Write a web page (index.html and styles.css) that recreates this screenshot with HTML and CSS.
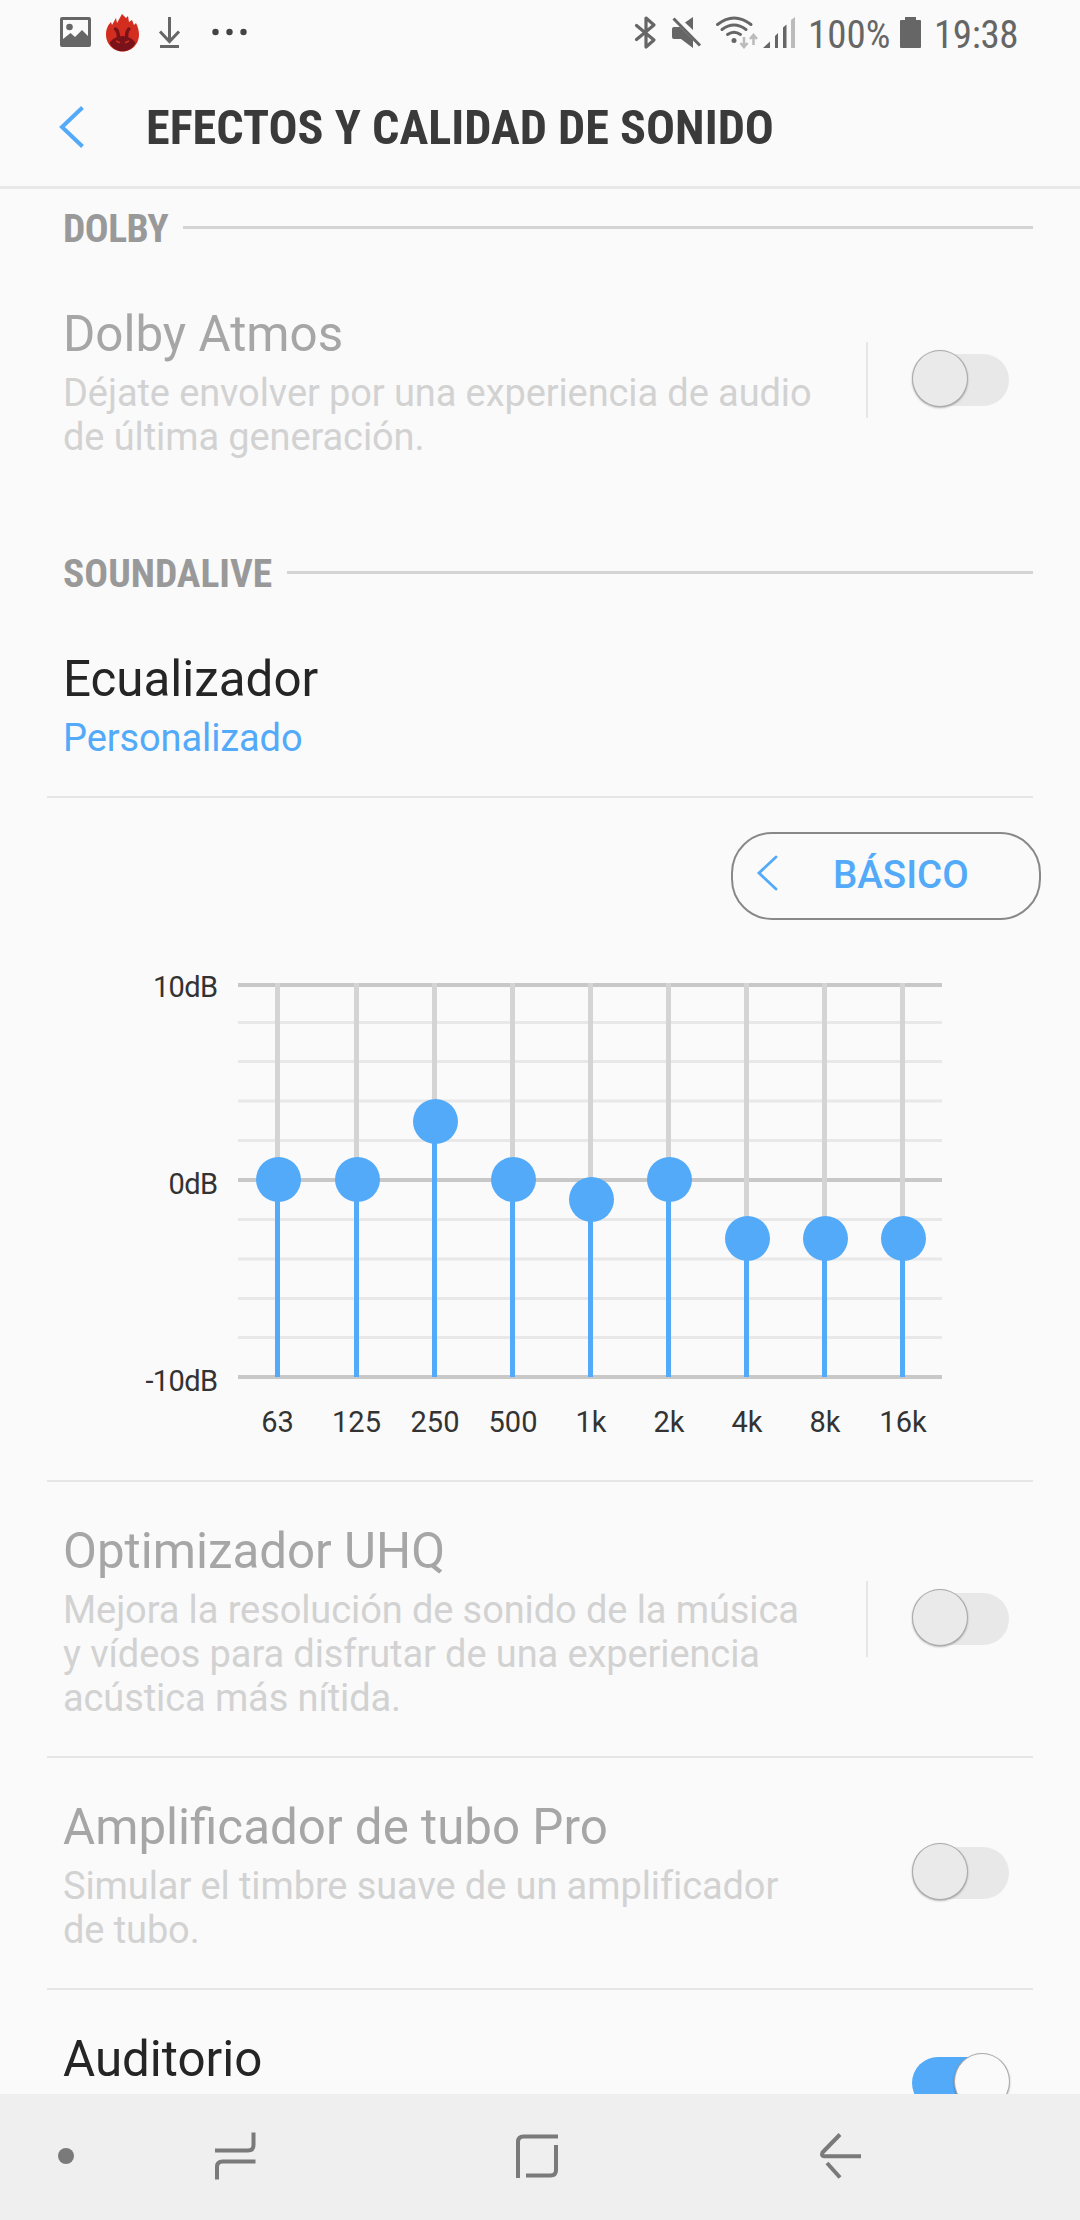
FILE: index.html
```html
<!DOCTYPE html>
<html lang="es">
<head>
	<meta charset="UTF-8">
	<title>Efectos y calidad de sonido</title>
	<link rel="stylesheet" href="styles.css">
</head>
<body>
	<div class="status">
		<svg class="statusLeft" width="260" height="64" viewBox="0 0 260 64">
			<!-- imagen -->
			<path fill="#666" fill-rule="evenodd" d="M62 17H89a2 2 0 0 1 2 2V45a2 2 0 0 1-2 2H62a2 2 0 0 1-2-2V19a2 2 0 0 1 2-2zM63 20V39L70.500 33 75 37 82 30 88 36V20z"/>
			<circle cx="69.500" cy="27" r="3.300" fill="#666"/>
			<!-- antutu -->
			<path fill="#d32d20" d="M106 35C106 29 108 25 111 22L112 25 116 18 117 23 122 14 126 18 128 16 129 22 132 20 134 25 136 23C138 27 139 31 139 35A16.500 16.500 0 0 1 106 35z"/>
			<path fill="none" stroke="#7a1219" stroke-width="3.400" stroke-linecap="round" d="M115.500 29Q118.500 31 118.500 38M129 29Q126.500 31 126.500 38"/>
			<path fill="#7a1219" d="M109.500 43C112 39 117 36 122.500 36S133 39 135.500 43C133 48 128 51.300 122.500 51.300S112 48 109.500 43z"/>
			<path stroke="#d32d20" stroke-width="1.500" d="M116 41l4 1.800M129 41l-4 1.800"/>
			<!-- descarga -->
			<path fill="none" stroke="#666" stroke-width="3" d="M169.500 17V42M160 31.500L169.500 41.500 179 31.500M160 46.500H179"/>
			<g fill="#444"><circle cx="215.500" cy="32" r="3.200"/><circle cx="229.500" cy="32" r="3.200"/><circle cx="243.500" cy="32" r="3.200"/></g>
		</svg>
		<div class="statusRight">
			<svg width="164" height="64" viewBox="634 0 164 64">
				<path fill="none" stroke="#666" stroke-width="3.200" stroke-linecap="round" stroke-linejoin="round" d="M636.500 25.500L654 40 646 47V18L654 25 636.500 39.500"/>
				<path fill="#666" d="M693 17V30L685 22.500zM672 29q0-2 2-2H680L693 40V48L681 39H674q-2 0-2-2z"/>
				<path stroke="#666" stroke-width="3" d="M673.500 18.500L700 45.500"/>
				<path fill="none" stroke="#666" stroke-width="3" stroke-linecap="round" d="M717.500 24.500Q734 11.500 751 24.500M722 29.500Q734 20.500 746 29.500M727.500 34.500Q734 30 740.500 34.500"/>
				<circle cx="734" cy="40.500" r="2.500" fill="#666"/>
				<path fill="none" stroke="#bbb" stroke-width="2.500" d="M744 37V46M740.500 43L744 47 747.500 43M753.500 45V36M750 39L753.500 35 757 39"/>
				<path fill="#666" d="M763 48L770 41.500V48zM775 36L778 33V48H775zM783 27.500L786.500 24.500V48H783z"/>
				<path fill="#bbb" d="M791 20L795 17V48H791z"/>
			</svg>
			<span class="percent">100%</span>
			<svg width="21" height="64" viewBox="900 0 21 64"><path fill="#666" d="M905 17H916V20H920a1 1 0 0 1 1 1V47a1 1 0 0 1-1 1H901a1 1 0 0 1-1-1V21a1 1 0 0 1 1-1H905z"/></svg>
			<span class="clock">19:38</span>
		</div>
	</div>
	<div class="header">
		<svg width="28" height="44" viewBox="0 0 28 44"><path fill="none" stroke="#52aaf9" stroke-width="4" d="M25.500 2.500L5 22 25.500 41.500"/></svg>
		<h1>EFECTOS Y CALIDAD DE SONIDO</h1>
	</div>
	<div class="content">
		<div class="section dolby"><h2>DOLBY</h2><i></i></div>
		<div class="row disabled">
			<div class="text">
				<h3>Dolby Atmos</h3>
				<p>Déjate envolver por una experiencia de audio<br>de última generación.</p>
			</div>
			<span class="sep"></span>
			<span class="switch"><b></b></span>
		</div>
		<div class="section second"><h2>SOUNDALIVE</h2><i></i></div>
		<div class="row line">
			<div class="text">
				<h3>Ecualizador</h3>
				<p class="value">Personalizado</p>
			</div>
		</div>
		<div class="equalizer line">
			<div class="basic">
				<svg width="24" height="38" viewBox="0 0 24 38"><path fill="none" stroke="#52aaf9" stroke-width="2.800" stroke-linecap="round" d="M21 3L4 19 21 35"/></svg>
				<span>BÁSICO</span>
			</div>
			<svg class="chart" width="986" height="500" viewBox="47 960 986 500">
				<path stroke="#c8c8c8" stroke-width="4" d="M238 985H942M238 1180H942M238 1377H942"/>
				<path stroke="#e8e8e8" stroke-width="3" d="M238 1022.500H942M238 1061.500H942M238 1101H942M238 1140.500H942M238 1219.500H942M238 1259H942M238 1298.500H942M238 1337.500H942"/>
				<path stroke="#d4d4d4" stroke-width="5" d="M277.500 983V1180M356.500 983V1180M434.500 983V1122M512.500 983V1180M590.500 983V1199M668.500 983V1180M746.500 983V1238M824.500 983V1238M902.500 983V1238"/>
				<path stroke="#52aaf9" stroke-width="5" d="M277.500 1180V1377M356.500 1180V1377M434.500 1122V1377M512.500 1180V1377M590.500 1199V1377M668.500 1180V1377M746.500 1238V1377M824.500 1238V1377M902.500 1238V1377"/>
				<g fill="#52aaf9">
					<circle cx="278.500" cy="1179.500" r="22.500"/>
					<circle cx="357.500" cy="1179.500" r="22.500"/>
					<circle cx="435.500" cy="1121.500" r="22.500"/>
					<circle cx="513.500" cy="1179.500" r="22.500"/>
					<circle cx="591.500" cy="1199.500" r="22.500"/>
					<circle cx="669.500" cy="1179.500" r="22.500"/>
					<circle cx="747.500" cy="1238.500" r="22.500"/>
					<circle cx="825.500" cy="1238.500" r="22.500"/>
					<circle cx="903.500" cy="1238.500" r="22.500"/>
				</g>
				<g class="db" text-anchor="end">
					<text x="217.500" y="997">10dB</text>
					<text x="217.500" y="1194">0dB</text>
					<text x="217.500" y="1391">-10dB</text>
				</g>
				<g text-anchor="middle">
					<text x="277.500" y="1432">63</text>
					<text x="356.500" y="1432">125</text>
					<text x="435" y="1432">250</text>
					<text x="513" y="1432">500</text>
					<text x="591" y="1432">1k</text>
					<text x="669" y="1432">2k</text>
					<text x="747" y="1432">4k</text>
					<text x="825" y="1432">8k</text>
					<text x="903" y="1432">16k</text>
				</g>
			</svg>
		</div>
		<div class="row line disabled">
			<div class="text">
				<h3>Optimizador UHQ</h3>
				<p>Mejora la resolución de sonido de la música<br>y vídeos para disfrutar de una experiencia<br>acústica más nítida.</p>
			</div>
			<span class="sep"></span>
			<span class="switch"><b></b></span>
		</div>
		<div class="row line disabled">
			<div class="text">
				<h3>Amplificador de tubo Pro</h3>
				<p>Simular el timbre suave de un amplificador<br>de tubo.</p>
			</div>
			<span class="switch"><b></b></span>
		</div>
		<div class="row last">
			<div class="text">
				<h3>Auditorio</h3>
			</div>
			<span class="switch on"><b></b></span>
		</div>
	</div>
	<div class="nav">
		<svg width="1080" height="126" viewBox="0 2094 1080 126">
			<circle cx="66" cy="2156" r="8" fill="#7a7a7a"/>
			<g fill="none" stroke="#7a7a7a" stroke-width="4">
				<path d="M253.500 2132.500V2145Q253.500 2150.500 248 2150.500H215M217 2179.500V2167Q217 2161.500 222.500 2161.500H255.500"/>
				<path d="M518 2178V2142Q518 2136.500 523.500 2136.500H558M556 2145V2170Q556 2175.500 550.500 2175.500H526"/>
				<path d="M840 2134.500L822.500 2152.500Q821 2156 824 2156.200H861M827 2163L840 2177.500"/>
			</g>
		</svg>
	</div>
</body>
</html>
```
FILE: styles.css
```css
*{margin: 0;padding: 0;box-sizing: border-box;}
body{
	width: 1080px;
	height: 2220px;
	overflow: hidden;
	display: flex;
	flex-direction: column;
	background-color: #fafafa;
	color: #252525;
	font-family: Roboto, sans-serif;
}
svg{display: block;flex: none;}
.status{
	height: 64px;
	display: flex;
	justify-content: space-between;
	padding-right: 64px;
}
.statusRight{
	display: flex;
	color: #666;
	font: 39px/70px "Roboto Condensed", Roboto, sans-serif;
}
.percent{
	width: 78px;
	margin: 0 14px 0 10px;
}
.clock{
	width: 82px;
	margin-left: 13px;
	letter-spacing: -.4px;
}
.header{
	height: 125px;
	display: flex;
	border-bottom: 3px solid #e8e8e8;
	padding-left: 57px;
}
.header svg{margin-top: 41px;}
.header h1{
	margin: 35px 0 0 61px;
	color: #3a3a3a;
	font: bold 48.2px/58px "Roboto Condensed", Roboto, sans-serif;
	white-space: nowrap;
}
.content{
	height: 1905px;
	overflow: hidden;
	padding: 0 47px;
}
.section{
	height: 76px;
	display: flex;
	padding: 16px 0 0 16px;
}
.section.second{
	height: 115px;
	padding-top: 55px;
}
.section h2{
	color: #999;
	font: bold 39.5px/48px "Roboto Condensed", Roboto, sans-serif;
}
.section.dolby h2{letter-spacing: -.5px;}
.section i{
	flex: 1;
	height: 3px;
	margin: 21px 0 0 15px;
	background: #d4d4d4;
}
.row{
	display: flex;
	align-items: center;
	padding: 40px 24px 36px 16px;
}
.line{border-bottom: 2px solid #e6e6e6;}
.text{flex: 1;white-space: nowrap;}
.row h3{
	font-size: 49.3px;
	font-weight: normal;
	line-height: 58px;
}
.row p{
	margin-top: 8px;
	font-size: 38px;
	line-height: 44px;
	letter-spacing: -.1px;
}
.disabled h3{color: #a6a6a6;}
.disabled p{color: #d2d2d2;}
.row .value{color: #52aaf9;}
.sep{
	width: 2px;
	height: 76px;
	margin-right: 44px;
	background: #e6e6e6;
}
.switch{
	width: 97px;
	height: 52px;
	border-radius: 26px;
	background: #e8e8e8;
}
.row .sep,.row .switch{margin-top: -4px;}
.switch b{
	display: block;
	width: 56px;
	height: 57px;
	margin-top: -4px;
	border-radius: 50%;
	border: 1px solid #aaa;
	background: #eaeaea;
	box-shadow: 0 1px 2px rgba(0,0,0,.3);
}
.switch.on{background: #52aaf9;}
.switch.on b{
	margin-left: 42px;
	background: #fafafa;
}
.row.last{height: 186px;align-items: flex-start;}
.row.last .switch{margin-top: 27px;}
.equalizer{
	height: 684px;
	padding-top: 34px;
}
.basic{
	width: 310px;
	height: 88px;
	margin: 0 -8px 0 auto;
	border: 2px solid #888;
	border-radius: 41px;
	display: flex;
	align-items: center;
	padding-left: 22px;
	color: #52aaf9;
	font-size: 38.5px;
	font-weight: 500;
}
.basic svg{margin-top: -6px;}
.basic span{margin: -3px 0 0 54px;}
.chart{margin-top: 40px;}
.chart text{
	font-size: 29px;
	fill: #333;
}
.chart .db text{letter-spacing: -.6px;}
.nav{
	height: 126px;
	background: #efefef;
}
```
